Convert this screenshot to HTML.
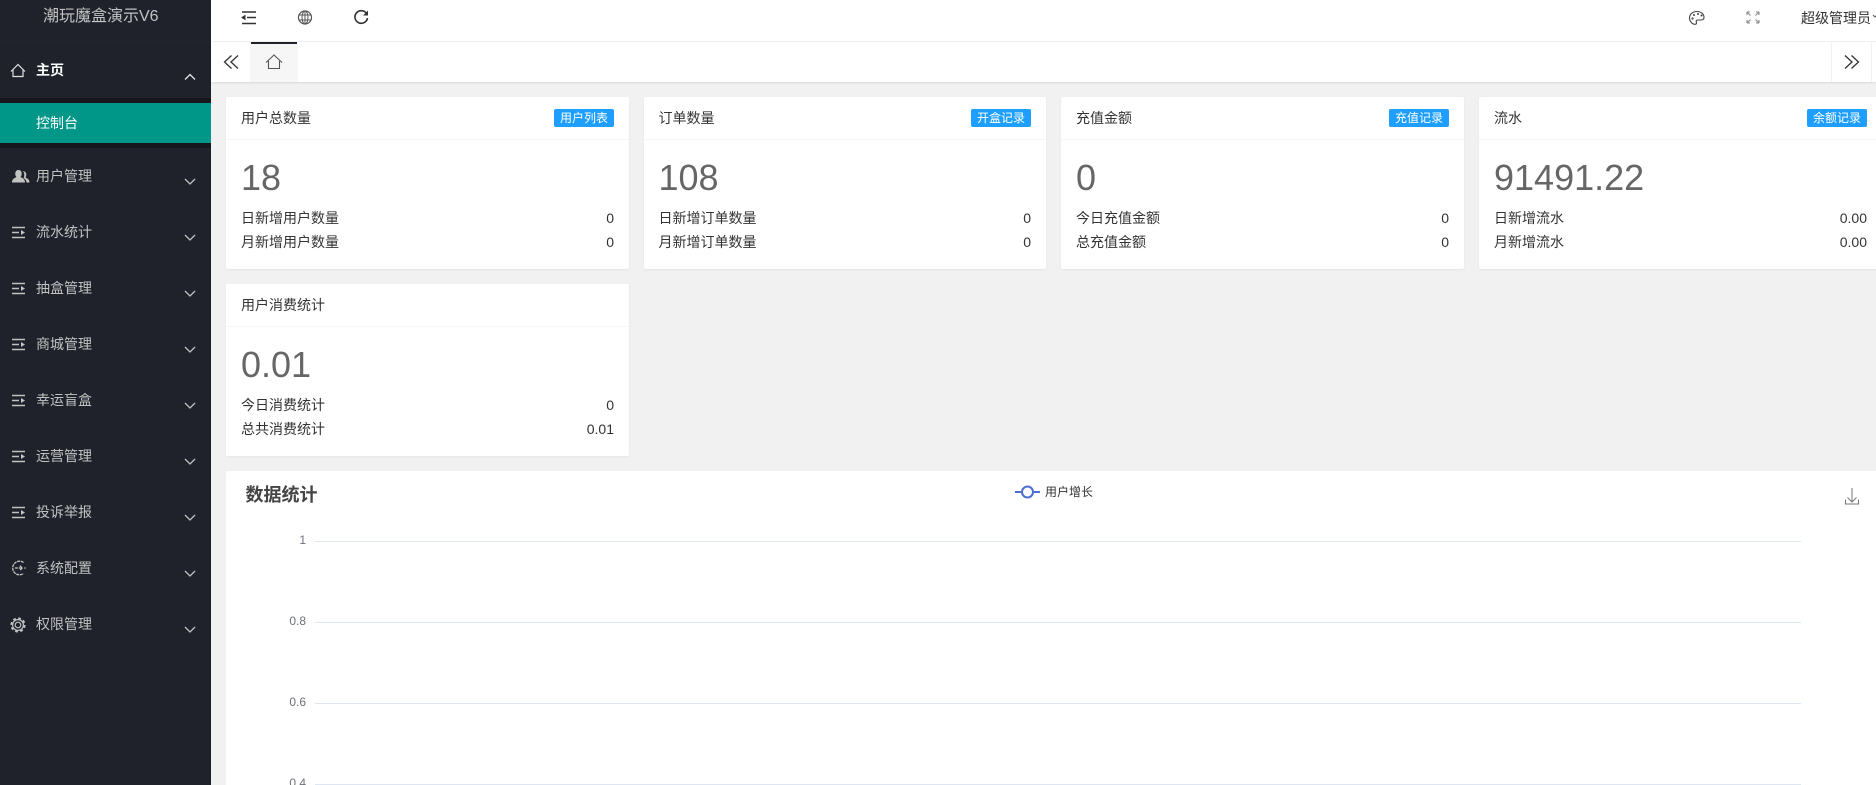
<!DOCTYPE html>
<html lang="zh-CN">
<head>
<meta charset="utf-8">
<title>潮玩魔盒演示V6</title>
<style>
*{box-sizing:border-box;margin:0;padding:0}
html,body{width:1876px;height:785px;overflow:hidden;background:#f1f1f1}
body{position:relative;font-family:"Liberation Sans","Noto Sans CJK SC",sans-serif;font-size:14px;color:#333}
.a{position:absolute;white-space:nowrap}
#side{position:absolute;left:0;top:0;width:211px;height:785px;background:#1f222b}
.nav{position:absolute;left:36px;color:#c2c2c2;font-size:14px;line-height:20px;white-space:nowrap}
.ic{position:absolute;left:0;top:0;overflow:visible}
.card{position:absolute;width:403px;height:172px;background:#fff;border-radius:2px;box-shadow:0 1px 2px rgba(0,0,0,.05);overflow:hidden}
.card .h{position:absolute;left:0;top:0;width:100%;height:43px;border-bottom:1px solid #f6f6f6;line-height:42px;padding-left:15px;color:#333}
.card .b{position:absolute;right:15px;top:12px;height:18px;line-height:18px;padding:0 6px;background:#1e9fff;color:#fff;font-size:12px;border-radius:2px}
.card .n{position:absolute;left:15px;top:61px;font-size:36px;line-height:40px;color:#666}
.card .r{position:absolute;left:15px;right:15px;height:24px;line-height:24px}
.card .r span{position:absolute;right:0;top:0}
.card .r1{top:109px}.card .r2{top:133px}
.gl{position:absolute;left:315px;width:1486px;height:1px;background:#e0e6f1}
.yl{position:absolute;right:1570px;font-size:12px;color:#6e7079;line-height:14px}
</style>
</head>
<body>
<div id="side">
  <div class="a" style="left:43px;top:6px;font-size:16px;line-height:22px;color:#c2c2c2">潮玩魔盒演示V6</div>
  <div class="a" style="left:0;top:41px;width:211px;height:1px;background:#22262f"></div>
  <div class="a" style="left:0;top:98px;width:211px;height:50px;background:#17181d"></div>
  <div class="a" style="left:0;top:103px;width:211px;height:40px;background:#009688"></div>
  <div class="nav" style="top:60px;color:#fff;font-weight:bold">主页</div>
  <div class="nav" style="top:113px;color:#fff">控制台</div>
  <div class="nav" style="top:166px">用户管理</div>
  <div class="nav" style="top:222px">流水统计</div>
  <div class="nav" style="top:278px">抽盒管理</div>
  <div class="nav" style="top:334px">商城管理</div>
  <div class="nav" style="top:390px">幸运盲盒</div>
  <div class="nav" style="top:446px">运营管理</div>
  <div class="nav" style="top:502px">投诉举报</div>
  <div class="nav" style="top:558px">系统配置</div>
  <div class="nav" style="top:614px">权限管理</div>
  <svg class="ic" width="211" height="785" fill="none" stroke="#c2c2c2">
    <!-- home -->
    <path d="M11 71.500 18 64.500 25 71.500M13 70V76.500H23V70" stroke="#e0e0e0" stroke-width="1.200"/>
    <!-- users -->
    <path d="M12 182.500c0-4 3-4.500 4.500-5.500-1.800-1.500-2-7 2-7s3.800 5.500 2 7c1.500 1 4.500 1.500 4.500 5.500z" fill="#c2c2c2" stroke="none"/>
    <path d="M26.500 182.500h3c0-3.500-2.500-4-4-5 1.300-1.500 1.500-6-2.500-6.500 1.500 2 1.800 5 .5 7 1.800 1 3 2.500 3 4.500z" fill="#c2c2c2" stroke="none"/>
    <!-- list icons -->
    <g stroke-width="1.600">
      <path d="M12 227.500H25M12 232.500H19M12 237.500H25"/>
      <path d="M12 283.500H25M12 288.500H19M12 293.500H25"/>
      <path d="M12 339.500H25M12 344.500H19M12 349.500H25"/>
      <path d="M12 395.500H25M12 400.500H19M12 405.500H25"/>
      <path d="M12 451.500H25M12 456.500H19M12 461.500H25"/>
      <path d="M12 507.500H25M12 512.500H19M12 517.500H25"/>
    </g>
    <g fill="#c2c2c2" stroke="none">
      <path d="M21 230 25 232.500 21 235Z"/>
      <path d="M21 286 25 288.500 21 291Z"/>
      <path d="M21 342 25 344.500 21 347Z"/>
      <path d="M21 398 25 400.500 21 403Z"/>
      <path d="M21 454 25 456.500 21 459Z"/>
      <path d="M21 510 25 512.500 21 515Z"/>
    </g>
    <!-- system -->
    <path d="M23.500 562.500A6.800 6.800 0 1 0 23.500 573.500M15 568H22.500M19.800 565.800 22.500 568 19.800 570.200" stroke-width="1.300" stroke-dasharray="3 .7"/>
    <circle cx="25" cy="568" r=".8" fill="#c2c2c2" stroke="none"/>
    <!-- gear -->
    <circle cx="18" cy="625" r="2.800" stroke-width="1.200"/>
    <circle cx="18" cy="625" r="5.400" stroke-width="1.200"/>
    <circle cx="18" cy="625" r="6.700" stroke-width="1.800" stroke-dasharray="2.800 2.460"/>
    <!-- chevrons -->
    <g stroke-width="1.300" stroke="#c2c2c2">
      <path d="M185 79.500 190 74.500 195 79.500" stroke="#e6e6e6"/>
      <path d="M185 179 190 184 195 179"/>
      <path d="M185 235 190 240 195 235"/>
      <path d="M185 291 190 296 195 291"/>
      <path d="M185 347 190 352 195 347"/>
      <path d="M185 403 190 408 195 403"/>
      <path d="M185 459 190 464 195 459"/>
      <path d="M185 515 190 520 195 515"/>
      <path d="M185 571 190 576 195 571"/>
      <path d="M185 627 190 632 195 627"/>
    </g>
  </svg>
</div>

<!-- top bar -->
<div class="a" style="left:211px;top:0;width:1665px;height:41px;background:#fff"></div>
<div class="a" style="left:211px;top:41px;width:1665px;height:1px;background:#f2f2f2"></div>
<div class="a" style="left:211px;top:42px;width:1665px;height:40px;background:#fff;box-shadow:0 1px 2px rgba(0,0,0,.1)"></div>
<div class="a" style="left:250px;top:42px;width:48px;height:40px;background:#f6f6f6"></div>
<div class="a" style="left:251px;top:42px;width:46px;height:2px;background:#1f222b"></div>
<div class="a" style="left:1831px;top:42px;width:1px;height:40px;background:#f2f2f2"></div>
<div class="a" style="left:1871px;top:42px;width:1px;height:40px;background:#f2f2f2"></div>
<div class="a" style="left:1801px;top:8px;line-height:20px;color:#333">超级管理员</div>
<svg class="ic" width="1876" height="90" fill="none" stroke="#333">
  <!-- fold -->
  <path d="M242 12H256M247 17.500H256M242 23.500H256" stroke-width="1.600"/>
  <path d="M245 15.500 242 17.500 245 19.500Z" fill="#333" stroke-width="1"/>
  <!-- globe -->
  <g stroke="#555" stroke-width="1">
    <circle cx="305" cy="17.500" r="6.500" stroke-width="1.200"/>
    <ellipse cx="305" cy="17.500" rx="3" ry="6.500"/>
    <path d="M305 11V24M299 15H311M299 20H311"/>
  </g>
  <!-- refresh -->
  <path d="M366.500 13.500A6.300 6.300 0 1 0 367.500 18" stroke-width="1.600"/>
  <path d="M368 10.500V15.500H363Z" fill="#333" stroke="none"/>
  <!-- palette -->
  <path d="M1697 11.500c-4.500 0-7.500 3-7.500 6.500s3 6.300 5.500 6.300c1.700 0 1.700-1.300 1.300-2.300-.5-1.200.3-2 1.700-2h2.500c2 0 3.500-.8 3.500-2.500 0-3.400-3-6-7-6z" stroke="#444" stroke-width="1.100"/>
  <g fill="#444" stroke="none">
    <circle cx="1692.500" cy="18.500" r="1.100"/><circle cx="1694" cy="15" r="1"/><circle cx="1698" cy="14" r="1"/><circle cx="1701.500" cy="15.500" r="1"/>
  </g>
  <!-- fullscreen -->
  <g stroke="#888" stroke-width="1.100">
    <path d="M1747 12V15M1747 12H1750M1747 12 1750.500 15.500M1759 12V15M1759 12H1756M1759 12 1755.500 15.500M1747 23V20M1747 23H1750M1747 23 1750.500 19.500M1759 23V20M1759 23H1756M1759 23 1755.500 19.500"/>
  </g>
  <path d="M1873 15 1875 17 1877 15" stroke="#555" stroke-width="1"/>
  <!-- tab arrows -->
  <g stroke="#333" stroke-width="1.300">
    <path d="M231.500 55.500 224.500 62 231.500 68.500M238 55.500 231 62 238 68.500"/>
    <path d="M1845 55.500 1852 62 1845 68.500M1851.500 55.500 1858.500 62 1851.500 68.500"/>
  </g>
  <!-- tab home -->
  <path d="M266 62.500 274 55 282 62.500M268.500 61V68.500H279.500V61" stroke="#555" stroke-width="1.100"/>
</svg>

<!-- cards -->
<div class="card" style="left:226px;top:97px">
  <div class="h">用户总数量</div><div class="b">用户列表</div>
  <div class="n">18</div>
  <div class="r r1">日新增用户数量<span>0</span></div>
  <div class="r r2">月新增用户数量<span>0</span></div>
</div>
<div class="card" style="left:643.500px;top:97px;width:402.500px">
  <div class="h">订单数量</div><div class="b">开盒记录</div>
  <div class="n">108</div>
  <div class="r r1">日新增订单数量<span>0</span></div>
  <div class="r r2">月新增订单数量<span>0</span></div>
</div>
<div class="card" style="left:1061px;top:97px">
  <div class="h">充值金额</div><div class="b">充值记录</div>
  <div class="n">0</div>
  <div class="r r1">今日充值金额<span>0</span></div>
  <div class="r r2">总充值金额<span>0</span></div>
</div>
<div class="card" style="left:1479px;top:97px">
  <div class="h">流水</div><div class="b">余额记录</div>
  <div class="n">91491.22</div>
  <div class="r r1">日新增流水<span>0.00</span></div>
  <div class="r r2">月新增流水<span>0.00</span></div>
</div>
<div class="card" style="left:226px;top:284px">
  <div class="h">用户消费统计</div>
  <div class="n">0.01</div>
  <div class="r r1">今日消费统计<span>0</span></div>
  <div class="r r2">总共消费统计<span>0.01</span></div>
</div>

<!-- chart -->
<div class="a" style="left:226px;top:471px;width:1650px;height:314px;background:#fff;border-radius:2px 0 0 0"></div>
<div class="a" style="left:245.500px;top:482px;font-size:18px;font-weight:bold;line-height:26px;color:#444">数据统计</div>
<svg class="ic" width="1876" height="785" fill="none" style="pointer-events:none">
  <path d="M1015 492H1040" stroke="#4f6fd0" stroke-width="2"/>
  <circle cx="1027.500" cy="492" r="5.500" fill="#fff" stroke="#4f6fd0" stroke-width="2"/>
  <path d="M1852 488V502M1847.500 497.500 1852 502 1856.500 497.500M1845.500 499.500V504H1858.500V499.500" stroke="#777" stroke-width="1"/>
</svg>
<div class="a" style="left:1045px;top:484px;font-size:12px;line-height:16px;color:#333">用户增长</div>
<div class="gl" style="top:541px"></div>
<div class="gl" style="top:622px"></div>
<div class="gl" style="top:703px"></div>
<div class="gl" style="top:784px"></div>
<div class="a yl" style="top:533px">1</div>
<div class="a yl" style="top:614px">0.8</div>
<div class="a yl" style="top:695px">0.6</div>
<div class="a yl" style="top:776px">0.4</div>
</body>
</html>
